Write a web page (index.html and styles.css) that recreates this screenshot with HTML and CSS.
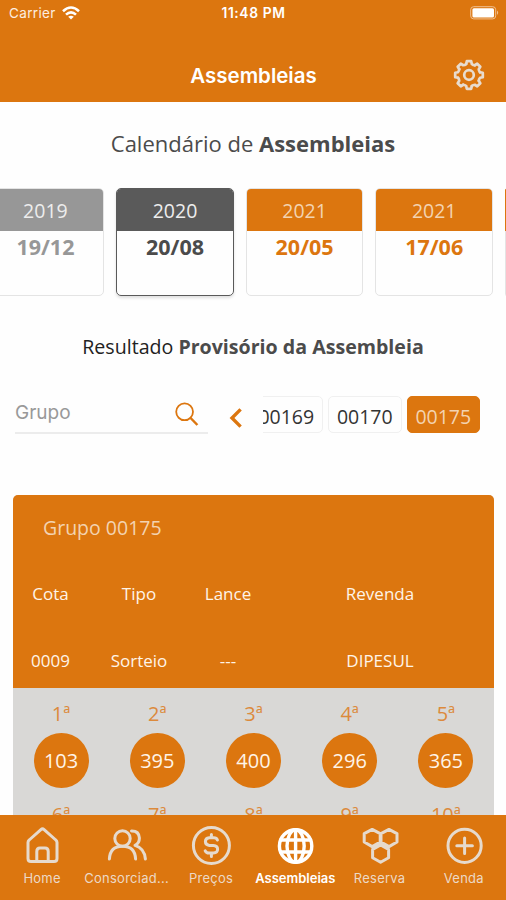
FILE: index.html
```html
<!DOCTYPE html>
<html lang="pt-BR">
<head>
    <meta charset="UTF-8">
    <meta name="viewport" content="width=device-width, initial-scale=1.0">
    <title>Assembleias</title>
    <link rel="stylesheet" href="styles.css">
</head>
<body>
    <header class="header">
        <div class="status-bar">
            <div class="carrier">
                <span>Carrier</span>
                <svg width="18" height="14" viewBox="0 0 18 14" fill="none" stroke="#fff" stroke-width="2.6">
                    <path d="M1 5.2Q9-2.2 17 5.2"/>
                    <path d="M4 8.6Q9 4 14 8.6"/>
                    <path d="M9 13.6L6.2 10.8Q9 8.6 11.8 10.8Z" fill="#fff" stroke="none"/>
                </svg>
            </div>
            <span class="clock">11:48 PM</span>
            <svg class="battery" width="30" height="14" viewBox="0 0 30 14">
                <rect x="0.7" y="0.7" width="25" height="12.2" rx="3" fill="none" stroke="#f0c092"/>
                <rect x="2.4" y="2.2" width="21.6" height="9.4" rx="1.5" fill="#fff"/>
                <path d="M27 4.6Q29.4 6.8 27 9Z" fill="#f0c092"/>
            </svg>
        </div>
        <div class="title-bar">
            <h1>Assembleias</h1>
            <svg class="gear" width="32" height="32" viewBox="-16 -16 32 32" fill="none" stroke="#e8dccf" stroke-width="2.7" stroke-linecap="round" stroke-linejoin="round">
                <defs>
                    <path id="tooth" d="M-2.8-11L-2.2-13.8H2.2L2.8-11Q4.1-9.8 5.8-9.76"/>
                </defs>
                <use href="#tooth"/>
                <use href="#tooth" transform="rotate(45)"/>
                <use href="#tooth" transform="rotate(90)"/>
                <use href="#tooth" transform="rotate(135)"/>
                <use href="#tooth" transform="rotate(180)"/>
                <use href="#tooth" transform="rotate(225)"/>
                <use href="#tooth" transform="rotate(270)"/>
                <use href="#tooth" transform="rotate(315)"/>
                <circle r="4.8"/>
            </svg>
        </div>
    </header>

    <main class="content">
        <h2 class="calendar-title">Calendário de <b>Assembleias</b></h2>

        <div class="dates">
            <div class="date past"><div class="year">2019</div><div class="day">19/12</div></div>
            <div class="date selected"><div class="year">2020</div><div class="day">20/08</div></div>
            <div class="date"><div class="year">2021</div><div class="day">20/05</div></div>
            <div class="date"><div class="year">2021</div><div class="day">17/06</div></div>
            <div class="date next"><div class="year"></div><div class="day"></div></div>
        </div>

        <h3 class="result-title">Resultado <b>Provisório da Assembleia</b></h3>

        <div class="filter">
            <div class="search">
                <span>Grupo</span>
                <svg width="24" height="24" viewBox="0 0 24 24" fill="none" stroke="#dc760f">
                    <circle cx="9.6" cy="9.8" r="8.4" stroke-width="1.8"/>
                    <path d="M15.6 16L22.4 23" stroke-width="2.5"/>
                </svg>
            </div>
            <svg class="prev" width="14" height="20" viewBox="0 0 14 20" fill="none" stroke="#dc760f" stroke-width="3.4">
                <path d="M11.6 1.4L3 10L11.6 18.6"/>
            </svg>
            <div class="groups">
                <span class="group">00169</span>
                <span class="group">00170</span>
                <span class="group active">00175</span>
            </div>
        </div>

        <section class="card">
            <div class="card-head">
                <div class="card-title">Grupo 00175</div>
                <div class="row">
                    <span>Cota</span><span>Tipo</span><span>Lance</span><span>Revenda</span>
                </div>
                <div class="row">
                    <span>0009</span><span>Sorteio</span><span>---</span><span>DIPESUL</span>
                </div>
            </div>
            <div class="numbers">
                <div class="number"><span>1ª</span><div class="ball">103</div></div>
                <div class="number"><span>2ª</span><div class="ball">395</div></div>
                <div class="number"><span>3ª</span><div class="ball">400</div></div>
                <div class="number"><span>4ª</span><div class="ball">296</div></div>
                <div class="number"><span>5ª</span><div class="ball">365</div></div>
                <div class="number"><span>6ª</span></div>
                <div class="number"><span>7ª</span></div>
                <div class="number"><span>8ª</span></div>
                <div class="number"><span>9ª</span></div>
                <div class="number"><span>10ª</span></div>
            </div>
        </section>
    </main>

    <nav class="tabs">
        <div class="tab">
            <svg viewBox="0 0 40 40">
                <path d="M6 16.5Q6 15 7.2 14L18.9 3.6Q20.5 2.2 22.1 3.6L33.8 14Q35 15 35 16.5V32.5Q35 35.5 32 35.5H9Q6 35.5 6 32.5Z"/>
                <path d="M14.8 35.5V25.5Q14.8 22 18 22H23Q26.2 22 26.2 25.5V35.5"/>
            </svg>
            <span>Home</span>
        </div>
        <div class="tab">
            <svg viewBox="0 0 40 40">
                <circle cx="15.5" cy="12.5" r="7.7"/>
                <path d="M2.4 33Q3 20.2 15.5 20.2T28.6 33"/>
                <path d="M24.5 5Q32 4.8 32.4 12Q32.4 17.5 28 19.4Q37.4 22.2 38.4 33"/>
            </svg>
            <span>Consorciad...</span>
        </div>
        <div class="tab">
            <svg viewBox="0 0 40 40">
                <circle cx="20.4" cy="19.5" r="18"/>
                <path d="M26.4 14Q25.6 11.8 22.8 11.8H18.2Q14.4 12.2 14.4 15.5T18.4 19.4H22.4Q26.6 19.6 26.6 23.2T22.4 27H18Q15.2 27 14.2 24.8M20.4 8.5V11.8M20.4 27V30.6"/>
            </svg>
            <span>Preços</span>
        </div>
        <div class="tab current">
            <svg viewBox="0 0 40 40">
                <circle cx="20.6" cy="20" r="16.2"/>
                <ellipse cx="20.6" cy="20" rx="8.6" ry="16.2"/>
                <path d="M20.6 4V36M5.6 14H35.6M5.6 26H35.6"/>
            </svg>
            <span>Assembleias</span>
        </div>
        <div class="tab">
            <svg viewBox="0 0 40 40">
                <path d="M12.2 3.4L20.2 7.6V16L12.2 20.6L4.2 16V7.6ZM29 3.4L37 7.6V16L29 20.6L21 16V7.6ZM20.6 19L28.6 23.4V31.8L20.6 36.2L12.6 31.8V23.4Z"/>
            </svg>
            <span>Reserva</span>
        </div>
        <div class="tab">
            <svg viewBox="0 0 40 40">
                <circle cx="20.6" cy="19.8" r="16.6"/>
                <path d="M20.6 12V27.6M12.8 19.8H28.4"/>
            </svg>
            <span>Venda</span>
        </div>
    </nav>
</body>
</html>
```

FILE: styles.css
```css
* {
    box-sizing: border-box;
}
body {
    margin: 0;
    height: 900px;
    display: flex;
    flex-direction: column;
    overflow: hidden;
    background-color: #fefefe;
    color: #4b4b4b;
    font-family: "Open Sans", sans-serif;
}
h1, h2, h3 {
    margin: 0;
    font-weight: normal;
}

/* header */
.header {
    height: 102px;
    flex: none;
    background-color: #dc760f;
    color: #fff;
    font-family: Inter, sans-serif;
}
.status-bar {
    display: grid;
    grid-template-columns: 1fr auto 1fr;
    align-items: center;
    height: 26px;
    padding: 0 6px 0 9px;
    font-size: 13.5px;
}
.carrier {
    display: flex;
    align-items: center;
    gap: 6px;
    letter-spacing: 0.35px;
    color: #fceee0;
}
.clock {
    font-weight: 600;
    font-size: 13.8px;
    letter-spacing: 0.6px;
    padding-right: 2px;
}
.battery {
    justify-self: end;
}
.title-bar {
    display: grid;
    grid-template-columns: 1fr auto 1fr;
    align-items: center;
    height: 76px;
    padding: 22px 21px 0 22px;
}
.title-bar h1 {
    grid-column: 2;
    font-size: 20.5px;
    font-weight: 600;
}
.gear {
    justify-self: end;
}

/* calendar */
.content {
    flex: 1;
    min-height: 0;
    overflow: hidden;
}
.calendar-title {
    padding-top: 26px;
    font-size: 22px;
    line-height: 30px;
    text-align: center;
}
.dates {
    display: flex;
    gap: 12px;
    margin: 30px 0 0 -13.4px;
}
.date {
    flex: none;
    width: 117.6px;
    height: 108px;
    border: 1px solid #e4e4e4;
    border-radius: 5px;
    overflow: hidden;
    text-align: center;
    color: #dc760f;
}
.year {
    height: 42px;
    line-height: 43px;
    font-size: 19.5px;
    background-color: #dc760f;
    color: #f3d3b1;
}
.day {
    font-size: 21.5px;
    line-height: 31px;
    font-weight: bold;
}
.past {
    color: #979797;
}
.past .year {
    background-color: #979797;
    color: #ededed;
}
.selected {
    color: #4b4b4b;
    border-color: #5a5a5a;
    box-shadow: 0 2px 3px rgba(0, 0, 0, 0.12);
}
.selected .year {
    background-color: #5a5a5a;
    color: #ededed;
}
.next {
    border-left: none;
    border-radius: 2px;
}
.next .day {
    height: 64px;
    border-left: 1px solid #e4e4e4;
}
.result-title {
    margin-top: 36px;
    font-size: 19.6px;
    line-height: 30px;
    text-align: center;
    color: #222;
}
.result-title b {
    color: #4b4b4b;
}

/* group filter */
.filter {
    display: flex;
    height: 38px;
    margin-top: 34px;
    padding: 0 26px 0 15px;
}
.search {
    width: 193px;
    height: 38px;
    display: flex;
    justify-content: space-between;
    padding: 6px 9px 0 0;
    border-bottom: 2px solid #ececec;
    font-family: Inter, sans-serif;
    font-size: 19px;
    line-height: 22px;
    color: #999;
}
.prev {
    margin: 12px 0 0 21px;
}
.groups {
    display: flex;
    flex: 1;
    justify-content: flex-end;
    gap: 5px;
    margin-left: 20px;
    overflow: hidden;
}
.group {
    flex: none;
    width: 73.5px;
    height: 37px;
    border: 1px solid #f0f0f0;
    border-radius: 5px;
    font-size: 19.5px;
    line-height: 39px;
    text-align: center;
    color: #333;
}
.active {
    background-color: #dc760f;
    border-color: #dc760f;
    color: #f3d3b1;
}

/* results */
.card {
    margin: 61px 12px 0 13px;
    border-radius: 5px 5px 0 0;
    overflow: hidden;
    background-color: #d9d8d6;
}
.card-head {
    height: 193px;
    background-color: #dc760f;
    color: #fff4e8;
}
.card-title {
    padding: 16px 30px 0;
    font-size: 19.5px;
    line-height: 34px;
    color: #f3d3b1;
}
.row {
    display: grid;
    grid-template-columns: 75px 102px 76px 1fr;
    margin-top: 33px;
    font-size: 17px;
    line-height: 32px;
    text-align: center;
}
.row + .row {
    margin-top: 35px;
}
.numbers {
    display: grid;
    grid-template-columns: repeat(5, 1fr);
    row-gap: 10px;
    padding-top: 9px;
}
.number {
    display: flex;
    flex-direction: column;
    align-items: center;
    font-size: 20px;
    line-height: 34px;
    color: #dc8a3c;
}
.ball {
    width: 55px;
    height: 55px;
    margin-top: 2px;
    border-radius: 50%;
    background-color: #dc760f;
    color: #fff4e8;
    line-height: 55px;
    text-align: center;
}

/* bottom tabs */
.tabs {
    flex: none;
    display: grid;
    grid-template-columns: repeat(6, 1fr);
    height: 85px;
    background-color: #dc760f;
    font-family: Inter, sans-serif;
    font-size: 13px;
    line-height: 18px;
    letter-spacing: 0.25px;
    color: #ecd9c6;
}
.tab {
    display: flex;
    flex-direction: column;
    align-items: center;
    padding-top: 11px;
    gap: 3px;
    white-space: nowrap;
}
.tab svg {
    width: 42px;
    height: 40px;
    fill: none;
    stroke: #e6dacd;
    stroke-width: 3;
    stroke-linecap: round;
    stroke-linejoin: round;
}
.current {
    color: #fff;
    font-weight: 600;
    letter-spacing: 0;
}
.current svg {
    stroke: #fff;
    stroke-width: 3.4;
}
```
